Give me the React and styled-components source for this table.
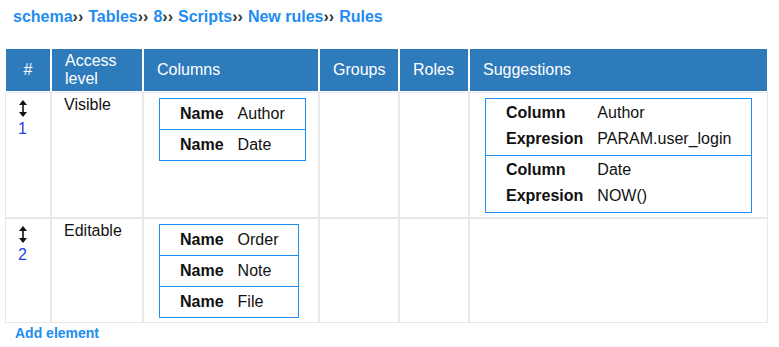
import React from 'react';
import styled, { createGlobalStyle } from 'styled-components';

const BLUE = '#1e8cf0';
const HEAD = '#2e7bbc';
const LINE = '#e8e8e8';

const GlobalStyle = createGlobalStyle`
  body {
    margin: 0;
    background: #fff;
    font-family: "Liberation Sans", Arial, sans-serif;
    color: #111;
  }
`;

const Page = styled.div`
  padding: 8px 0 0 5px;
`;

const Crumbs = styled.div`
  padding-left: 8px;
  font-size: 16px;
  font-weight: bold;
  line-height: 18px;
  margin-bottom: 23px;
`;

const Crumb = styled.a`
  color: ${BLUE};
  text-decoration: none;
`;

const Sep = styled.span`
  color: #333;
  margin-right: 5px;
`;

const Grid = styled.table`
  border-collapse: separate;
  border-spacing: 0;
  table-layout: fixed;
  width: 763px;
  font-size: 16px;
`;

const Head = styled.th`
  background: ${HEAD};
  color: #fff;
  font-weight: normal;
  text-align: ${p => (p.$center ? 'center' : 'left')};
  line-height: 18px;
  padding: ${p => (p.$center ? '3px 0' : '3px 12px 3px 13px')};
  border-left: 1px solid #fff;
  border-right: 1px solid #fff;
  border-bottom: 1px solid #fff;
  vertical-align: middle;
`;

const Cell = styled.td`
  border: 1px solid ${LINE};
  vertical-align: top;
  padding: ${p => p.$pad || '5px 15px 4px'};
  line-height: 18px;
`;

const Handle = styled.div`
  display: inline-flex;
  flex-direction: column;
  align-items: center;
  width: 9px;
  padding-top: 1px;
`;

const Num = styled.a`
  color: #2443e6;
  text-decoration: none;
  line-height: 18px;
  margin-top: 3px;
`;

const Box = styled.table`
  border-collapse: collapse;
  border: 1px solid ${BLUE};
  line-height: 30px;
  color: #111;
`;

const BoxRow = styled.tr`
  & + & {
    border-top: 1px solid ${BLUE};
  }
`;

const Group = styled.tbody`
  & + & {
    border-top: 1px solid ${BLUE};
  }
  & tr:first-child td {
    padding-top: 1px;
  }
  & tr:last-child td {
    padding-bottom: 3px;
  }
`;

const Key = styled.td`
  font-weight: bold;
  padding: 0 14px 0 20px;
  white-space: nowrap;
`;

const Val = styled.td`
  padding: 0 20px 0 0;
  white-space: nowrap;
`;

const SugRow = styled.tr`
  line-height: 26px;
`;

const AddLink = styled.a`
  display: block;
  margin: 2px 0 0 10px;
  color: ${BLUE};
  font-size: 14px;
  font-weight: bold;
  line-height: 16px;
  text-decoration: none;
`;

const MoveIcon = () => (
  <svg width="8" height="17" viewBox="0 0 8 17">
    <path d="M4 0 L8 5 H0 Z" fill="#111" />
    <rect x="3.2" y="4" width="1.6" height="9" fill="#111" />
    <path d="M4 17 L8 12 H0 Z" fill="#111" />
  </svg>
);

const crumbs = ['schema', 'Tables', '8', 'Scripts', 'New rules'];

const rules = [
  {
    id: 1,
    access: 'Visible',
    columns: ['Author', 'Date'],
    suggestions: [
      { column: 'Author', expr: 'PARAM.user_login' },
      { column: 'Date', expr: 'NOW()' },
    ],
  },
  {
    id: 2,
    access: 'Editable',
    columns: ['Order', 'Note', 'File'],
    suggestions: [],
  },
];

const Columns = ({ names }) => (
  <Box>
    <tbody>
      {names.map(n => (
        <BoxRow key={n}>
          <Key>Name</Key>
          <Val>{n}</Val>
        </BoxRow>
      ))}
    </tbody>
  </Box>
);

const Suggestions = ({ items }) => (
  <Box>
    {items.map(s => (
      <Group key={s.column}>
        <SugRow>
          <Key>Column</Key>
          <Val>{s.column}</Val>
        </SugRow>
        <SugRow>
          <Key>Expresion</Key>
          <Val>{s.expr}</Val>
        </SugRow>
      </Group>
    ))}
  </Box>
);

export default function App() {
  return (
    <Page>
      <GlobalStyle />
      <Crumbs>
        {crumbs.map(c => (
          <React.Fragment key={c}>
            <Crumb href="#">{c}</Crumb>
            <Sep>››</Sep>
          </React.Fragment>
        ))}
        <Crumb href="#">Rules</Crumb>
      </Crumbs>

      <Grid>
        <colgroup>
          <col style={{ width: 46 }} />
          <col style={{ width: 92 }} />
          <col style={{ width: 176 }} />
          <col style={{ width: 80 }} />
          <col style={{ width: 70 }} />
          <col style={{ width: 299 }} />
        </colgroup>
        <thead>
          <tr>
            <Head $center>#</Head>
            <Head>Access<br />level</Head>
            <Head>Columns</Head>
            <Head>Groups</Head>
            <Head>Roles</Head>
            <Head>Suggestions</Head>
          </tr>
        </thead>
        <tbody>
          {rules.map(r => (
            <tr key={r.id}>
              <Cell $pad="6px 0 4px 12px">
                <Handle>
                  <MoveIcon />
                  <Num href="#">{r.id}</Num>
                </Handle>
              </Cell>
              <Cell $pad="3px 12px 4px">{r.access}</Cell>
              <Cell>
                <Columns names={r.columns} />
              </Cell>
              <Cell />
              <Cell />
              <Cell>
                {r.suggestions.length > 0 && <Suggestions items={r.suggestions} />}
              </Cell>
            </tr>
          ))}
        </tbody>
      </Grid>

      <AddLink href="#">Add element</AddLink>
    </Page>
  );
}
